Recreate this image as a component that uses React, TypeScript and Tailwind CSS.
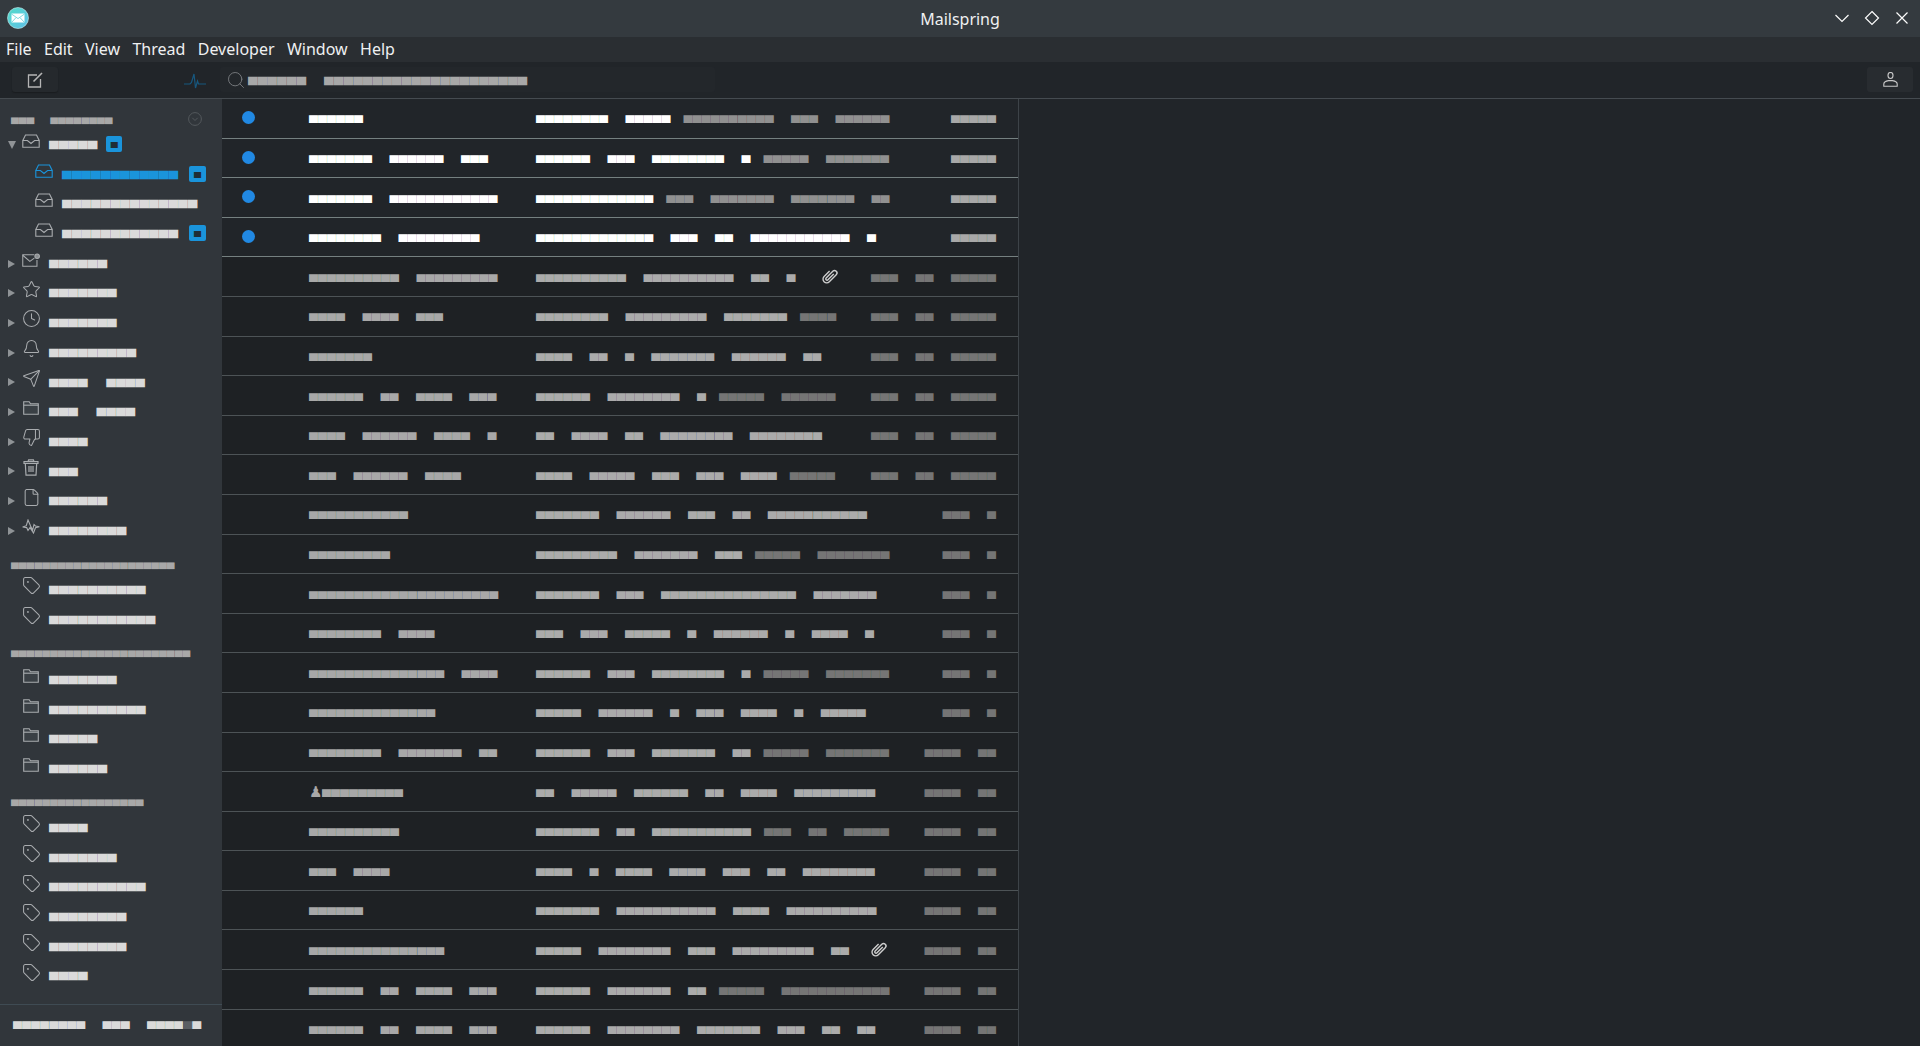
import type { ReactNode } from 'react';
import { Bell, Clock, File, Search, Send, Star, Tag, ThumbsDown } from 'lucide-react';

interface MailRow {
  from: number[];
  subject: number[];
  snippet?: number[];
  date: number[];
  unread?: boolean;
  clip?: string;
  me?: boolean;
}

const D_OLD = [3, 2, 5];
const D_MID = [3, 1];
const D_NEW = [4, 2];

const ROWS: MailRow[] = [
  { from: [6], subject: [8, 5], snippet: [10, 3, 6], date: [5], unread: true },
  { from: [7, 6, 3], subject: [6, 3, 8, 1], snippet: [5, 7], date: [5], unread: true },
  { from: [7, 12], subject: [13], snippet: [3, 7, 7, 2], date: [5], unread: true },
  { from: [8, 9], subject: [13, 3, 2, 11, 1], date: [5], unread: true },
  { from: [10, 9], subject: [10, 10, 2, 1], date: D_OLD, clip: 'ml-[26px]' },
  { from: [4, 4, 3], subject: [8, 9, 7], snippet: [4], date: D_OLD },
  { from: [7], subject: [4, 2, 1, 7, 6, 2], date: D_OLD },
  { from: [6, 2, 4, 3], subject: [6, 8, 1], snippet: [5, 6], date: D_OLD },
  { from: [4, 6, 4, 1], subject: [2, 4, 2, 8, 8], date: D_OLD },
  { from: [3, 6, 4], subject: [4, 5, 3, 3, 4], snippet: [5], date: D_OLD },
  { from: [11], subject: [7, 6, 3, 2, 11], date: D_MID },
  { from: [9], subject: [9, 7, 3], snippet: [5, 8], date: D_MID },
  { from: [21], subject: [7, 3, 15, 7], date: D_MID },
  { from: [8, 4], subject: [3, 3, 5, 1, 6, 1, 4, 1], date: D_MID },
  { from: [15, 4], subject: [6, 3, 8, 1], snippet: [5, 7], date: D_MID },
  { from: [14], subject: [5, 6, 1, 3, 4, 1, 5], date: D_MID },
  { from: [8, 7, 2], subject: [6, 3, 7, 2], snippet: [5, 7], date: D_NEW },
  { from: [9], subject: [2, 5, 6, 2, 4, 9], date: D_NEW, me: true },
  { from: [10], subject: [7, 2, 11], snippet: [3, 2, 5], date: D_NEW },
  { from: [3, 4], subject: [4, 1, 4, 4, 3, 2, 8], date: D_NEW },
  { from: [6], subject: [7, 11, 4, 10], date: D_NEW },
  { from: [15], subject: [5, 8, 3, 9, 2], date: D_NEW, clip: 'ml-[21px]' },
  { from: [6, 2, 4, 3], subject: [6, 7, 2], snippet: [5, 12], date: D_NEW },
  { from: [6, 2, 4, 3], subject: [6, 8, 7, 3, 2, 2], date: D_NEW },
];

const MENU = ['File', 'Edit', 'View', 'Thread', 'Developer', 'Window', 'Help'];

function bars(cells: number[]): string {
  return cells.map((n) => '▄'.repeat(n)).join(' ');
}

function Bar({ cells, className = '' }: { cells: number[]; className?: string }) {
  return <span className={`inline-block whitespace-pre leading-none ${className}`}>{bars(cells)}</span>;
}

function InboxIcon({ className = 'text-[#a9acaf]' }: { className?: string }) {
  return (
    <svg viewBox="0 0 18 14" className={`h-[14px] w-[18px] ${className}`} fill="none" stroke="currentColor" strokeWidth="1.1">
      <path d="M.8 6.5 3.5 1h11l2.700 5.500v6.800H.8Z" />
      <path d="M.8 6.500h4.600l3.600 3 3.600-3h4.600" />
    </svg>
  );
}

function UnreadIcon() {
  return (
    <svg viewBox="0 0 19 14" className="h-[14px] w-[19px] text-[#a9acaf]" fill="none" stroke="currentColor" strokeWidth="1.1">
      <path d="M13 1.500H.8v12h15V7" />
      <path d="M.8 2 8.300 8.500 13 5" />
      <circle cx="16" cy="3" r="2.400" fill="#8b8f92" stroke="#a9acaf" />
    </svg>
  );
}

function FolderIcon() {
  return (
    <svg viewBox="0 0 16 14" className="h-[14px] w-[16px] text-[#a9acaf]" fill="none" stroke="currentColor" strokeWidth="1.1">
      <path d="M.7 13.300V.7h5.500l1.300 2h7.800v10.600Z" fill="#3a4045" />
      <path d="M.7 4.200h14.600" />
    </svg>
  );
}

function TrashIcon() {
  return (
    <svg viewBox="0 0 16 17" className="h-[17px] w-[16px] text-[#a9acaf]" fill="none" stroke="currentColor" strokeWidth="1.2">
      <path d="M1 4.500V2.600h14v1.900ZM5 2.600 5.600.8h4.800l.6 1.800M2.300 4.500l.7 11.700h10l.7-11.700" />
      <path d="M6 7v6M8 7v6M10 7v6" />
    </svg>
  );
}

function PulseIcon() {
  return (
    <svg viewBox="0 0 18 15" className="h-[15px] w-[18px] text-[#a9acaf]" fill="none" stroke="currentColor" strokeWidth="1.1">
      <path d="m.6 8 3.600-1.200L6 1l2.600 6 2 4.200L12 5.500 13.400 7l4 .8-3.900 1L11.500 14 8 8.600 6 11.500 4.700 8.600Z" />
    </svg>
  );
}

function ClipIcon({ className = '' }: { className?: string }) {
  return (
    <svg viewBox="-6 0 22 22" className={`h-[18px] w-[18px] shrink-0 text-[#cfcfcf] ${className}`} fill="none" stroke="currentColor" strokeWidth="1.700">
      <g transform="rotate(45 5 11)">
        <path d="M6.500 6v10a1.600 1.600 0 0 1-3.200 0V4.500a3 3 0 0 1 6 0v12a4.500 4.500 0 0 1-9 0V7" />
      </g>
    </svg>
  );
}

function Glyph({ children }: { children: ReactNode }) {
  return <span className="flex h-[18px] w-[18px] shrink-0 items-center justify-center">{children}</span>;
}

const lucideIcon = 'h-[19px] w-[19px] shrink-0 text-[#a9acaf]';

function TreeItem({
  icon,
  cells,
  arrow = 'right',
  sub = false,
  active = false,
  badge,
}: {
  icon: ReactNode;
  cells: number[];
  arrow?: 'right' | 'down' | 'none';
  sub?: boolean;
  active?: boolean;
  badge?: 'near' | 'far';
}) {
  return (
    <div className={`flex h-[29.7px] shrink-0 items-center ${sub ? 'pl-[35px]' : 'pl-[8px]'}`}>
      {!sub && (
        <span className="flex w-[14px] shrink-0 items-center">
          {arrow === 'right' && <span className="h-0 w-0 border-y-[4.5px] border-l-[7px] border-y-transparent border-l-[#8f9396]" />}
          {arrow === 'down' && <span className="h-0 w-0 border-x-[4px] border-t-[8px] border-x-transparent border-t-[#8f9396]" />}
        </span>
      )}
      <span className="mb-[8px]">
        <Glyph>{icon}</Glyph>
      </span>
      <Bar
        cells={cells}
        className={`mb-[10px] ml-[9px] text-[13.66px] [word-spacing:15px] ${active ? 'text-[#1a94db]' : 'text-[#dadada]'}`}
      />
      {badge && (
        <span
          className={`mb-[2px] flex h-[16px] items-center justify-center rounded-[2px] bg-[#1a94db] ${
            badge === 'near' ? 'ml-[9px] w-[16px]' : 'absolute left-[189px] w-[17px]'
          }`}
        >
          <span className="mb-[5px] text-[10px] leading-none text-[#1f2d36]">▄</span>
        </span>
      )}
    </div>
  );
}

function SectionHead({ cells, className = '' }: { cells: number[]; className?: string }) {
  return (
    <div className={`flex items-end pl-[11px] ${className}`}>
      <Bar cells={cells} className="text-[11px] text-[#a8a8a8]" />
    </div>
  );
}

function Sidebar() {
  const tag = <Tag className={lucideIcon} strokeWidth={1.3} />;
  const folder = <FolderIcon />;
  return (
    <aside className="relative flex w-[222px] shrink-0 flex-col bg-[#31363b]">
      <div className="relative flex h-[31px] shrink-0 items-center pl-[11px] pt-[4px] [word-spacing:13px]">
        <Bar cells={[3, 8]} className="text-[11px] text-[#a8a8a8]" />
        <svg viewBox="0 0 14 14" className="absolute left-[188px] top-[13px] h-[14px] w-[14px] text-[#53585c]" fill="none" stroke="currentColor" strokeWidth="1">
          <circle cx="7" cy="7" r="6.400" />
          <path d="m4.300 5.800 2.700 2.700 2.700-2.700" />
        </svg>
      </div>
      <TreeItem icon={<InboxIcon />} cells={[5]} arrow="down" badge="near" />
      <TreeItem icon={<InboxIcon className="text-[#1a94db]" />} cells={[12]} sub active badge="far" />
      <TreeItem icon={<InboxIcon />} cells={[14]} sub />
      <TreeItem icon={<InboxIcon />} cells={[12]} sub badge="far" />
      <TreeItem icon={<UnreadIcon />} cells={[6]} />
      <TreeItem icon={<Star className={lucideIcon} strokeWidth={1.3} />} cells={[7]} />
      <TreeItem icon={<Clock className={lucideIcon} strokeWidth={1.3} />} cells={[7]} />
      <TreeItem icon={<Bell className={lucideIcon} strokeWidth={1.3} />} cells={[9]} />
      <TreeItem icon={<Send className={lucideIcon} strokeWidth={1.3} />} cells={[4, 4]} />
      <TreeItem icon={folder} cells={[3, 4]} />
      <TreeItem icon={<ThumbsDown className={lucideIcon} strokeWidth={1.3} />} cells={[4]} />
      <TreeItem icon={<TrashIcon />} cells={[3]} />
      <TreeItem icon={<File className={lucideIcon} strokeWidth={1.3} />} cells={[6]} />
      <TreeItem icon={<PulseIcon />} cells={[8]} />
      <SectionHead cells={[21]} className="h-[29.4px] shrink-0 pb-[8px]" />
      <TreeItem icon={tag} cells={[10]} arrow="none" />
      <TreeItem icon={tag} cells={[11]} arrow="none" />
      <SectionHead cells={[23]} className="h-[30.6px] shrink-0 pb-[10px]" />
      <TreeItem icon={folder} cells={[7]} arrow="none" />
      <TreeItem icon={folder} cells={[10]} arrow="none" />
      <TreeItem icon={folder} cells={[5]} arrow="none" />
      <TreeItem icon={folder} cells={[6]} arrow="none" />
      <SectionHead cells={[17]} className="h-[29.2px] shrink-0 pb-[9px]" />
      <TreeItem icon={tag} cells={[4]} arrow="none" />
      <TreeItem icon={tag} cells={[7]} arrow="none" />
      <TreeItem icon={tag} cells={[10]} arrow="none" />
      <TreeItem icon={tag} cells={[8]} arrow="none" />
      <TreeItem icon={tag} cells={[8]} arrow="none" />
      <TreeItem icon={tag} cells={[4]} arrow="none" />
      <div className="mt-auto flex h-[42px] shrink-0 items-center border-t border-[#3f4b53] pb-[10px] pl-[13px] text-[12.75px] text-[#dadada] [word-spacing:14px]">
        <Bar cells={[8, 3, 4]} />
        <span className="leading-none text-[#5a5e63]">▄</span>
        <span className="leading-none">▄</span>
      </div>
    </aside>
  );
}

function Row({ row }: { row: MailRow }) {
  const { unread, clip, me } = row;
  return (
    <div
      className={`flex h-[39.6px] shrink-0 items-center border-b ${
        unread ? 'border-[#758080] bg-[#212529]' : 'border-[#4d5356] bg-[#1e2124]'
      }`}
    >
      <div className="flex w-[87px] shrink-0 items-center pl-[20px]">
        {unread && <span className="mb-[1px] h-[13px] w-[13px] rounded-full bg-[#2189e3]" />}
      </div>
      <div className={`flex w-[227px] shrink-0 items-center text-[12.72px] [word-spacing:14.1px] ${unread ? 'text-white' : 'text-[#a8a8a8]'}`}>
        {me && <span className="flex w-[13px] justify-center text-[15px] leading-none text-[#a8a8a8]">♟</span>}
        <Bar cells={row.from} className="mb-[7px]" />
      </div>
      <div className="flex min-w-0 flex-1 items-center text-[12.72px] [word-spacing:14.1px]">
        <Bar cells={row.subject} className={`mb-[7px] ${unread ? 'text-white' : 'text-[#ababab]'}`} />
        {row.snippet && <Bar cells={row.snippet} className={`mb-[7px] ml-[13px] ${unread ? 'text-[#909090]' : 'text-[#757575]'}`} />}
        {clip && <ClipIcon className={`mb-[1px] ${clip}`} />}
      </div>
      <div className="flex shrink-0 items-center pr-[22px]">
        <Bar cells={row.date} className={`mb-[7px] text-[12.72px] [word-spacing:14.1px] ${unread ? 'text-[#a8a8a8]' : 'text-[#757575]'}`} />
      </div>
    </div>
  );
}

export default function App() {
  return (
    <div className="flex h-screen flex-col overflow-hidden bg-[#212529] font-['Noto_Sans',sans-serif] text-[#eff0f1]">
      {/* window title */}
      <div className="relative flex h-[37px] shrink-0 items-center justify-center bg-[#343a3f]">
        <svg viewBox="0 0 22 22" className="absolute left-[7px] top-[7px] h-[22px] w-[22px]">
          <defs>
            <linearGradient id="logo" x1="0" y1="0" x2="1" y2="1">
              <stop offset="0" stopColor="#52dcc8" />
              <stop offset="1" stopColor="#60bfe9" />
            </linearGradient>
          </defs>
          <circle cx="11" cy="11" r="10.500" fill="url(#logo)" stroke="#c9ecef" strokeWidth="0.6" />
          <path d="M4.500 6.500h13v9h-13Z" fill="#ffffff" />
          <path d="m4.500 7 6.500 4.600L17.500 7M4.500 15.500l4.600-5M17.500 15.500l-4.600-5" fill="none" stroke="#61d0d8" strokeWidth="0.8" />
        </svg>
        <span className="text-[16px] leading-none">Mailspring</span>
        <div className="absolute right-[9px] top-[9px] flex items-center gap-[12px] text-[#fcfcfc]">
          <svg viewBox="0 0 18 18" className="h-[18px] w-[18px]" fill="none" stroke="currentColor" strokeWidth="1.2">
            <path d="M2.500 6 9 12.500 15.500 6" />
          </svg>
          <svg viewBox="0 0 18 18" className="h-[18px] w-[18px]" fill="none" stroke="currentColor" strokeWidth="1.2">
            <path d="M9 2.500 15.500 9 9 15.500 2.500 9Z" />
          </svg>
          <svg viewBox="0 0 18 18" className="h-[18px] w-[18px]" fill="none" stroke="currentColor" strokeWidth="1.2">
            <path d="m3.500 3.500 11 11M14.500 3.500l-11 11" />
          </svg>
        </div>
      </div>

      {/* app menu */}
      <div className="flex h-[25px] shrink-0 items-center gap-[12.4px] bg-[#2a2e32] pb-[2px] pl-[6px] text-[16px] leading-none">
        {MENU.map((m) => (
          <span key={m}>{m}</span>
        ))}
      </div>

      {/* toolbar */}
      <div className="flex h-[37px] shrink-0 items-center border-b border-[#454b50] bg-[#212529] pb-[1px]">
        <div className="flex w-[220px] shrink-0 items-center pl-[12px]">
          <div className="flex h-[25px] w-[46px] items-center justify-center rounded-[3px] bg-[#25292d] shadow-[0_1px_1px_#1a1d20]">
            <svg viewBox="0 0 16 16" className="h-[16px] w-[16px] text-[#b5b5b5]" fill="none" stroke="currentColor">
              <path d="M10 3H1.500v12h12V7" strokeWidth="1.3" />
              <path d="M6.500 9.500 15 1" strokeWidth="1.6" />
            </svg>
          </div>
          <svg viewBox="0 0 22 16" className="ml-[126px] mt-[2px] h-[16px] w-[22px] text-[#17587f]" fill="none" stroke="currentColor" strokeWidth="1.2">
            <path d="M0 11h6l1.500-1.500L10 1l1.500 14 2-7 1 3H22" />
          </svg>
        </div>
        <div className="flex h-[25px] w-[495px] items-center rounded-[3px] bg-[#23272b] pl-[6px]">
          <Search className="h-[20px] w-[20px] shrink-0 text-[#7a7d80]" strokeWidth={1.1} />
          <Bar cells={[6, 21]} className="mb-[7px] ml-[2px] text-[13.66px] text-[#a8a8a8] [word-spacing:14.500px]" />
        </div>
        <div className="ml-auto mr-[7px] flex h-[25px] w-[46px] items-center justify-center rounded-[3px] bg-[#282c30]">
          <svg viewBox="0 0 15 15" className="h-[15px] w-[15px] text-[#c8c8c8]" fill="none" stroke="currentColor" strokeWidth="1.1">
            <ellipse cx="7.500" cy="3.500" rx="2.500" ry="3" />
            <path d="M.8 14.300V12c0-1.500 2-2.900 4.700-3.400h4c2.700.5 4.700 1.900 4.700 3.400v2.300Z" />
          </svg>
        </div>
      </div>

      <div className="flex min-h-0 flex-1 overflow-hidden">
        <Sidebar />
        <main className="flex w-[797px] shrink-0 flex-col overflow-hidden border-r border-[#3d4348]">
          {ROWS.map((row, i) => (
            <Row key={i} row={row} />
          ))}
        </main>
        <div className="flex-1 bg-[#212529]" />
      </div>
    </div>
  );
}
